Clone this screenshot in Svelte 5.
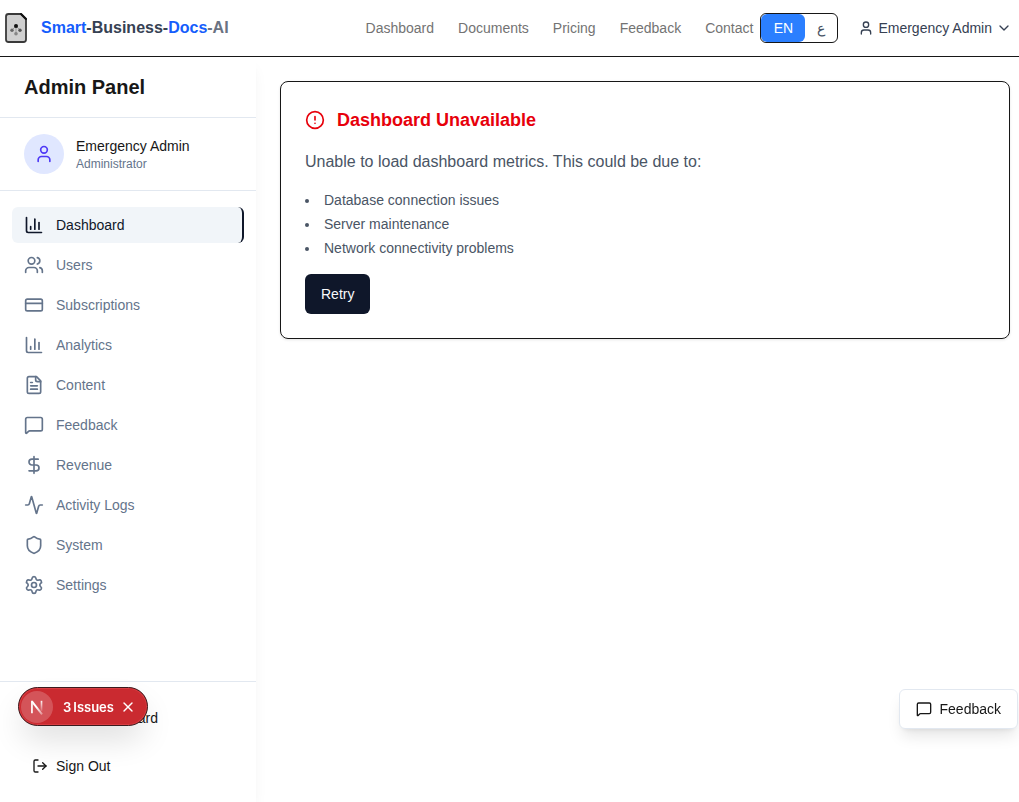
<script>
  const icons = {
    user: '<path d="M19 21v-2a4 4 0 0 0-4-4H9a4 4 0 0 0-4 4v2"/><circle cx="12" cy="7" r="4"/>',
    chevron: '<path d="m6 9 6 6 6-6"/>',
    chart: '<path d="M3 3v16a2 2 0 0 0 2 2h16"/><path d="M18 17V9"/><path d="M13 17V5"/><path d="M8 17v-3"/>',
    users: '<path d="M16 21v-2a4 4 0 0 0-4-4H6a4 4 0 0 0-4 4v2"/><path d="M16 3.128a4 4 0 0 1 0 7.744"/><path d="M22 21v-2a4 4 0 0 0-3-3.87"/><circle cx="9" cy="7" r="4"/>',
    card: '<rect width="20" height="14" x="2" y="5" rx="2"/><path d="M2 10h20"/>',
    file: '<path d="M15 2H6a2 2 0 0 0-2 2v16a2 2 0 0 0 2 2h12a2 2 0 0 0 2-2V7Z"/><path d="M14 2v4a2 2 0 0 0 2 2h4"/><path d="M10 9H8"/><path d="M16 13H8"/><path d="M16 17H8"/>',
    message: '<path d="M22 17a2 2 0 0 1-2 2H6.828a2 2 0 0 0-1.414.586l-2.202 2.202A.71.71 0 0 1 2 21.286V5a2 2 0 0 1 2-2h16a2 2 0 0 1 2 2z"/>',
    dollar: '<path d="M12 2v20"/><path d="M17 5H9.5a3.5 3.5 0 0 0 0 7h5a3.5 3.5 0 0 1 0 7H6"/>',
    activity: '<path d="M22 12h-2.48a2 2 0 0 0-1.93 1.46l-2.35 8.36a.25.25 0 0 1-.48 0L9.24 2.18a.25.25 0 0 0-.48 0l-2.35 8.36A2 2 0 0 1 4.49 12H2"/>',
    shield: '<path d="M20 13c0 5-3.5 7.5-7.66 8.95a1 1 0 0 1-.67-.01C7.5 20.5 4 18 4 13V6a1 1 0 0 1 1-1c2 0 4.5-1.2 6.24-2.72a1.17 1.17 0 0 1 1.52 0C14.51 3.81 17 5 19 5a1 1 0 0 1 1 1z"/>',
    settings: '<path d="M9.671 4.136a2.34 2.34 0 0 1 4.659 0 2.34 2.34 0 0 0 3.319 1.915 2.34 2.34 0 0 1 2.33 4.033 2.34 2.34 0 0 0 0 3.831 2.34 2.34 0 0 1-2.33 4.033 2.34 2.34 0 0 0-3.319 1.915 2.34 2.34 0 0 1-4.659 0 2.34 2.34 0 0 0-3.32-1.915 2.34 2.34 0 0 1-2.33-4.033 2.34 2.34 0 0 0 0-3.831A2.34 2.34 0 0 1 6.35 6.051a2.34 2.34 0 0 0 3.319-1.915"/><circle cx="12" cy="12" r="3"/>',
    alert: '<circle cx="12" cy="12" r="10"/><path d="M12 8v4"/><path d="M12 16h.01"/>',
    logout: '<path d="m16 17 5-5-5-5"/><path d="M21 12H9"/><path d="M9 21H5a2 2 0 0 1-2-2V5a2 2 0 0 1 2-2h4"/>',
    close: '<path d="M18 6 6 18"/><path d="m6 6 12 12"/>'
  };
  const links = ['Dashboard', 'Documents', 'Pricing', 'Feedback', 'Contact'];
  const menu = [
    ['Dashboard', 'chart'],
    ['Users', 'users'],
    ['Subscriptions', 'card'],
    ['Analytics', 'chart'],
    ['Content', 'file'],
    ['Feedback', 'message'],
    ['Revenue', 'dollar'],
    ['Activity Logs', 'activity'],
    ['System', 'shield'],
    ['Settings', 'settings']
  ];
  const causes = ['Database connection issues', 'Server maintenance', 'Network connectivity problems'];
  let active = $state('Dashboard');
  let lang = $state('en');
  let issuesOpen = $state(true);
</script>

{#snippet icon(name, size)}
  <svg class="icon" width={size} height={size} viewBox="0 0 24 24" fill="none" stroke="currentColor" stroke-width="2" stroke-linecap="round" stroke-linejoin="round" aria-hidden="true">{@html icons[name]}</svg>
{/snippet}

<div class="page">
  <header>
    <a class="brand" href="#home">
      <svg width="24" height="32" viewBox="0 0 24 32" aria-hidden="true">
        <path d="M4.500 2H17l5 5V27.500a2.500 2.500 0 0 1-2.500 2.500h-15A2.500 2.500 0 0 1 2 27.500v-23A2.500 2.500 0 0 1 4.500 2z" fill="#d0d0d0" stroke="#3a3a3a" stroke-width="1.800" stroke-linejoin="round" />
        <path d="M17 2l5 5" stroke="#111" stroke-width="2" stroke-linecap="round" />
        <path d="M12 14L8 18M12 14l4 4M12 14v8" stroke="#999" fill="none" />
        <circle cx="12" cy="14" r="2" fill="#111" />
        <circle cx="8" cy="18.300" r="1.700" fill="#666" />
        <circle cx="16" cy="18.300" r="1.700" fill="#555" />
        <circle cx="12" cy="21.700" r="1.800" fill="#858585" />
      </svg>
      <span class="name"><b>Smart</b>-Business-<b>Docs</b><i>-AI</i></span>
    </a>
    <nav class="links" aria-label="Main">
      {#each links as link}<a href="#{link.toLowerCase()}">{link}</a>{/each}
    </nav>
    <div class="lang">
      <button class:on={lang === 'en'} onclick={() => (lang = 'en')}>EN</button>
      <button class:on={lang === 'ar'} onclick={() => (lang = 'ar')} lang="ar">ع</button>
    </div>
    <button class="account">{@render icon('user', 16)}<span>Emergency Admin</span>{@render icon('chevron', 16)}</button>
  </header>

  <div class="body">
    <aside>
      <h2>Admin Panel</h2>
      <div class="profile">
        <span class="avatar">{@render icon('user', 20)}</span>
        <div>
          <p class="who">Emergency Admin</p>
          <p class="role">Administrator</p>
        </div>
      </div>
      <nav class="menu" aria-label="Admin">
        {#each menu as [label, name]}
          <a href="#admin" class:active={active === label} onclick={() => (active = label)}>{@render icon(name, 20)}{label}</a>
        {/each}
      </nav>
      <div class="foot">
        <a href="#user">{@render icon('user', 16)}User Dashboard</a>
        <button>{@render icon('logout', 16)}Sign Out</button>
      </div>
    </aside>

    <main>
      <section class="card">
        <h3>{@render icon('alert', 20)}Dashboard Unavailable</h3>
        <p>Unable to load dashboard metrics. This could be due to:</p>
        <ul>
          {#each causes as cause}<li>{cause}</li>{/each}
        </ul>
        <button class="retry">Retry</button>
      </section>
    </main>
  </div>

  {#if issuesOpen}
    <div class="issues">
      <span class="mark">
        <svg width="18" height="18" viewBox="0 0 16 16" fill="none" aria-hidden="true">
          <defs>
            <linearGradient id="fadeA" x1="8" y1="8" x2="13" y2="15" gradientUnits="userSpaceOnUse"><stop stop-color="#fff" /><stop offset="1" stop-color="#fff" stop-opacity="0.300" /></linearGradient>
            <linearGradient id="fadeB" x1="12" y1="2" x2="12" y2="12" gradientUnits="userSpaceOnUse"><stop stop-color="#fff" /><stop offset="1" stop-color="#fff" stop-opacity="0.100" /></linearGradient>
          </defs>
          <path d="M3.500 3L12.500 14.500" stroke="url(#fadeA)" stroke-width="1.700" />
          <path d="M3.500 13.500V2.500" stroke="#fff" stroke-width="1.500" />
          <path d="M12 2.500v9" stroke="url(#fadeB)" stroke-width="1.500" />
        </svg>
      </span>
      <button class="count"><span>3</span> <span>Issues</span></button>
      <button class="close" aria-label="Close" onclick={() => (issuesOpen = false)}>{@render icon('close', 16)}</button>
    </div>
  {/if}

  <button class="feedback">{@render icon('message', 16)}Feedback</button>
</div>

<style>
  :global(body) { margin: 0; background: #fff; }
  .page {
    min-height: 100vh;
    display: flex;
    flex-direction: column;
    font-family: "Liberation Sans", Arial, sans-serif;
    font-size: 14px;
    line-height: 20px;
    color: #171717;
  }
  .page * { box-sizing: border-box; }
  a { color: inherit; text-decoration: none; }
  button { font: inherit; color: inherit; border: 0; background: none; padding: 0; cursor: pointer; }
  h2, h3, p, ul { margin: 0; padding: 0; }
  .icon { flex: none; display: block; }

  header {
    display: flex;
    align-items: center;
    height: 57px;
    padding: 0 7px 0 4px;
    border-bottom: 1px solid #171717;
    white-space: nowrap;
  }
  .brand { display: flex; align-items: center; gap: 13px; }
  .name { font-size: 16px; line-height: 24px; font-weight: 700; color: #364153; }
  .name b { color: #155dfc; }
  .name i { color: #6a7282; font-style: normal; }
  .links { display: flex; gap: 24px; margin-left: auto; color: #737373; }
  .lang {
    display: flex;
    height: 30px;
    margin-left: 7px;
    border: 1px solid #171717;
    border-radius: 6px;
    overflow: hidden;
    color: #4a5565;
  }
  .lang button { padding: 0 12px; border-radius: 6px; }
  .lang .on { min-width: 44px; background: #2b7fff; color: #fff; }
  .account { display: flex; align-items: center; gap: 4px; margin-left: 20px; color: #364153; }

  .body { flex: 1; display: flex; }
  aside {
    flex: none;
    width: 256px;
    display: flex;
    flex-direction: column;
    box-shadow: 0 10px 15px -3px rgba(0, 0, 0, 0.06), 0 4px 6px -4px rgba(0, 0, 0, 0.06);
    clip-path: inset(0 -24px 0 0);
  }
  h2 { padding: 16px 24px; font-size: 20px; line-height: 28px; border-bottom: 1px solid #e2e8f0; }
  .profile { display: flex; align-items: center; gap: 12px; padding: 16px 24px; border-bottom: 1px solid #e2e8f0; }
  .avatar { display: grid; place-items: center; width: 40px; height: 40px; border-radius: 50%; background: #e0e7ff; color: #4f39f6; }
  .role { font-size: 12px; line-height: 16px; color: #64748b; }
  .menu { display: flex; flex-direction: column; gap: 4px; padding: 16px 12px; }
  .menu a { display: flex; align-items: center; gap: 12px; height: 36px; padding: 0 12px; border-radius: 6px; color: #64748b; }
  .menu .active { background: #f1f5f9; color: #0f172a; border-right: 2px solid #0f172a; }
  .foot { margin-top: auto; padding: 16px 12px; display: flex; flex-direction: column; gap: 8px; border-top: 1px solid #e2e8f0; }
  .foot a, .foot button { display: flex; align-items: center; gap: 8px; height: 40px; padding: 0 20px; }

  main { flex: 1; min-width: 0; padding: 24px 9px 24px 24px; }
  .card { padding: 24px; border: 1px solid #171717; border-radius: 8px; box-shadow: 0 1px 3px rgba(0, 0, 0, 0.1); color: #4a5565; }
  h3 { display: flex; align-items: center; gap: 12px; font-size: 18px; line-height: 28px; color: #e7000b; }
  .card p { margin-top: 16px; font-size: 16px; line-height: 24px; }
  .card ul { margin: 16px 0; list-style: disc inside; display: flex; flex-direction: column; gap: 4px; }
  .retry { height: 40px; padding: 0 16px; border-radius: 6px; background: #0f172a; color: #f8fafc; }

  .issues {
    position: fixed;
    left: 18px;
    bottom: 76px;
    display: flex;
    align-items: center;
    height: 39px;
    padding: 0 11px 0 2px;
    border: 1px solid #3c1a1d;
    border-radius: 20px;
    background: #ca2a30;
    color: #fff;
    box-shadow: inset 0 0 0 1px #d93d42, 0 16px 32px -4px rgba(0, 0, 0, 0.14);
  }
  .mark { display: grid; place-items: center; width: 32px; height: 32px; border-radius: 50%; background: rgba(255, 255, 255, 0.2); }
  .count { display: flex; gap: 2px; margin-left: 10px; font-family: Inter, "Liberation Sans", sans-serif; font-size: 13px; font-weight: 600; }
  .close { margin-left: 6px; }
  .feedback {
    position: fixed;
    right: 1px;
    bottom: 73px;
    display: flex;
    align-items: center;
    gap: 8px;
    height: 40px;
    padding: 0 16px;
    border: 1px solid #e2e8f0;
    border-radius: 6px;
    background: #fff;
    box-shadow: 0 10px 15px -3px rgba(0, 0, 0, 0.1), 0 4px 6px -4px rgba(0, 0, 0, 0.1);
  }
</style>
